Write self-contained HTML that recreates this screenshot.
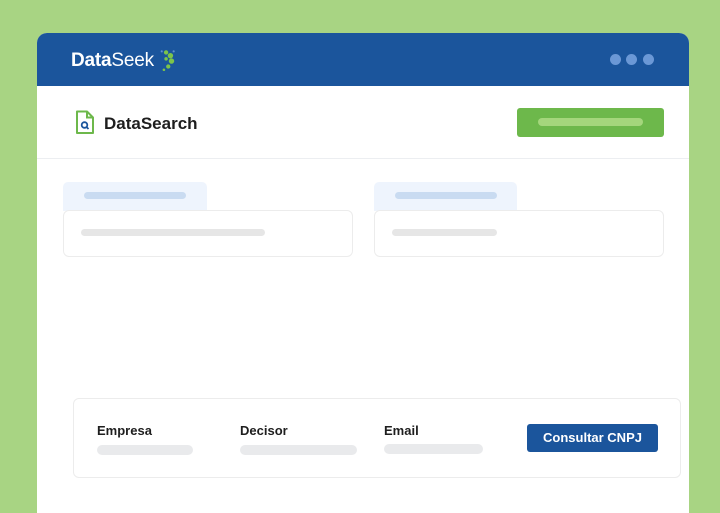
<!DOCTYPE html>
<html><head><meta charset="utf-8"><style>
*{margin:0;padding:0;box-sizing:border-box}
body{width:720px;height:500px;background:#a8d483;position:relative;overflow:hidden;font-family:"Liberation Sans",sans-serif}
.win{position:absolute;left:37px;top:33px;width:652px;height:480px;background:#fff;border-radius:10px 10px 0 0;overflow:hidden}
.hdr{position:absolute;left:0;top:0;width:652px;height:53px;background:#1b559c}
.a{position:absolute}
.dot{position:absolute;width:11px;height:11px;border-radius:50%;background:#6b98d6;top:21px}
.bar{position:absolute;border-radius:4px}
.lbl{position:absolute;font-weight:bold;font-size:13px;color:#1e1e1e}
</style></head><body>
<div class="win">
 <div class="hdr">
  <div class="a" style="left:34px;top:17px;color:#fff;font-size:19px;letter-spacing:-0.2px"><b>Data</b>Seek</div>
  <svg class="a" style="left:116px;top:14px" width="24" height="26" viewBox="0 0 22 24">
   <circle cx="12" cy="5" r="2" fill="#7cc44a"/><circle cx="16" cy="8" r="2.5" fill="#7cc44a"/><circle cx="17" cy="13" r="2.5" fill="#7cc44a"/><circle cx="14" cy="18" r="2" fill="#7cc44a"/><circle cx="12" cy="11" r="1.6" fill="#7cc44a"/><circle cx="8" cy="4" r="1" fill="#5f8fd0"/><circle cx="10" cy="21" r="1.2" fill="#7cc44a"/><circle cx="19" cy="4" r="1" fill="#5f8fd0"/>
  </svg>
  <div class="dot" style="left:573px"></div><div class="dot" style="left:589px"></div><div class="dot" style="left:606px"></div>
 </div>
 <svg class="a" style="left:38px;top:77px" width="20" height="25" viewBox="0 0 20 25">
  <path d="M2 1.5h10l6 6v15.5h-16z" fill="none" stroke="#6db84b" stroke-width="2" stroke-linejoin="round"/>
  <path d="M12 1.5v6h6" fill="none" stroke="#6db84b" stroke-width="2"/>
  <circle cx="9.5" cy="15" r="2.8" fill="none" stroke="#1b559c" stroke-width="1.8"/><path d="M11.5 17l2 2" stroke="#1b559c" stroke-width="1.8"/>
 </svg>
 <div class="a" style="left:67px;top:81px;font-size:17px;font-weight:bold;color:#1e1e1e">DataSearch</div>
 <div class="a" style="left:480px;top:75px;width:147px;height:29px;background:#6db84b;border-radius:3px"></div>
 <div class="bar" style="left:501px;top:85px;width:105px;height:8px;background:#a4d67c"></div>
 <div class="a" style="left:0;top:125px;width:652px;height:1px;background:#eceef1"></div>

 <div class="a" style="left:26px;top:149px;width:144px;height:29px;background:#eef4fd;border-radius:5px 5px 0 0"></div>
 <div class="bar" style="left:47px;top:159px;width:102px;height:7px;background:#c9dbf1"></div>
 <div class="a" style="left:26px;top:177px;width:290px;height:47px;border:1px solid #ececec;border-radius:6px;background:#fff"></div>
 <div class="bar" style="left:44px;top:196px;width:184px;height:7px;background:#e6e6e6"></div>

 <div class="a" style="left:337px;top:149px;width:143px;height:29px;background:#eef4fd;border-radius:5px 5px 0 0"></div>
 <div class="bar" style="left:358px;top:159px;width:102px;height:7px;background:#c9dbf1"></div>
 <div class="a" style="left:337px;top:177px;width:290px;height:47px;border:1px solid #ececec;border-radius:6px;background:#fff"></div>
 <div class="bar" style="left:355px;top:196px;width:105px;height:7px;background:#e6e6e6"></div>
</div>

<div class="a" style="left:73px;top:398px;width:608px;height:80px;border:1px solid #ececec;border-radius:6px;background:#fff"></div>
<div class="lbl" style="left:97px;top:423px">Empresa</div>
<div class="lbl" style="left:240px;top:423px">Decisor</div>
<div class="lbl" style="left:384px;top:423px">Email</div>
<div class="bar" style="left:97px;top:445px;width:96px;height:10px;background:#e9eaec;border-radius:5px"></div>
<div class="bar" style="left:240px;top:445px;width:117px;height:10px;background:#e9eaec;border-radius:5px"></div>
<div class="bar" style="left:384px;top:444px;width:99px;height:10px;background:#e9eaec;border-radius:5px"></div>
<div class="a" style="left:527px;top:424px;width:131px;height:28px;background:#1b559c;border-radius:3px;color:#fff;font-size:13px;font-weight:bold;text-align:center;line-height:28px">Consultar CNPJ</div>
</body></html>
